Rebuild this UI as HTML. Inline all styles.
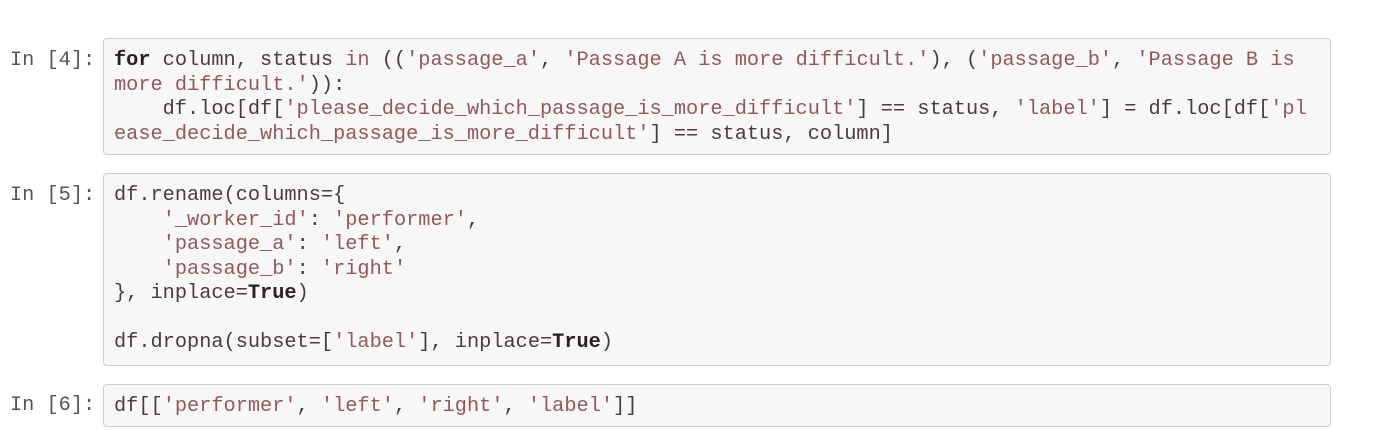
<!DOCTYPE html>
<html><head><style>
html,body{margin:0;padding:0;background:#fff;width:1400px;height:430px;overflow:hidden}
.p{position:absolute;left:10px;font:20.3px/24.5px "Liberation Mono",monospace;color:#555}
.b{position:absolute;left:103px;width:1228px;background:#f7f7f7;border:1px solid #cfcfcf;border-radius:4px;box-sizing:border-box;padding:10px 0 6px 10px}
pre{margin:0;font:20.3px/24.5px "Liberation Mono",monospace;color:#4a3c3c;white-space:pre}
.s{color:#955858}.k{font-weight:bold;color:#2b2020}
</style></head><body>
<div class="p" style="top:49px">In [4]:</div>
<div class="b" style="top:38px;height:117px"><pre><span class="k">for</span> column, status <span class="s">in</span> ((<span class="s">'passage_a'</span>, <span class="s">'Passage A is more difficult.'</span>), (<span class="s">'passage_b'</span>, <span class="s">'Passage B is
more difficult.'</span>)):
    df.loc[df[<span class="s">'please_decide_which_passage_is_more_difficult'</span>] == status, <span class="s">'label'</span>] = df.loc[df[<span class="s">'pl
ease_decide_which_passage_is_more_difficult'</span>] == status, column]</pre></div>
<div class="p" style="top:184px">In [5]:</div>
<div class="b" style="top:173px;height:193px"><pre>df.rename(columns={
    <span class="s">'_worker_id'</span>: <span class="s">'performer'</span>,
    <span class="s">'passage_a'</span>: <span class="s">'left'</span>,
    <span class="s">'passage_b'</span>: <span class="s">'right'</span>
}, inplace=<span class="k">True</span>)

df.dropna(subset=[<span class="s">'label'</span>], inplace=<span class="k">True</span>)</pre></div>
<div class="p" style="top:394px">In [6]:</div>
<div class="b" style="top:384px;height:43px"><pre>df[[<span class="s">'performer'</span>, <span class="s">'left'</span>, <span class="s">'right'</span>, <span class="s">'label'</span>]]</pre></div>
</body></html>
